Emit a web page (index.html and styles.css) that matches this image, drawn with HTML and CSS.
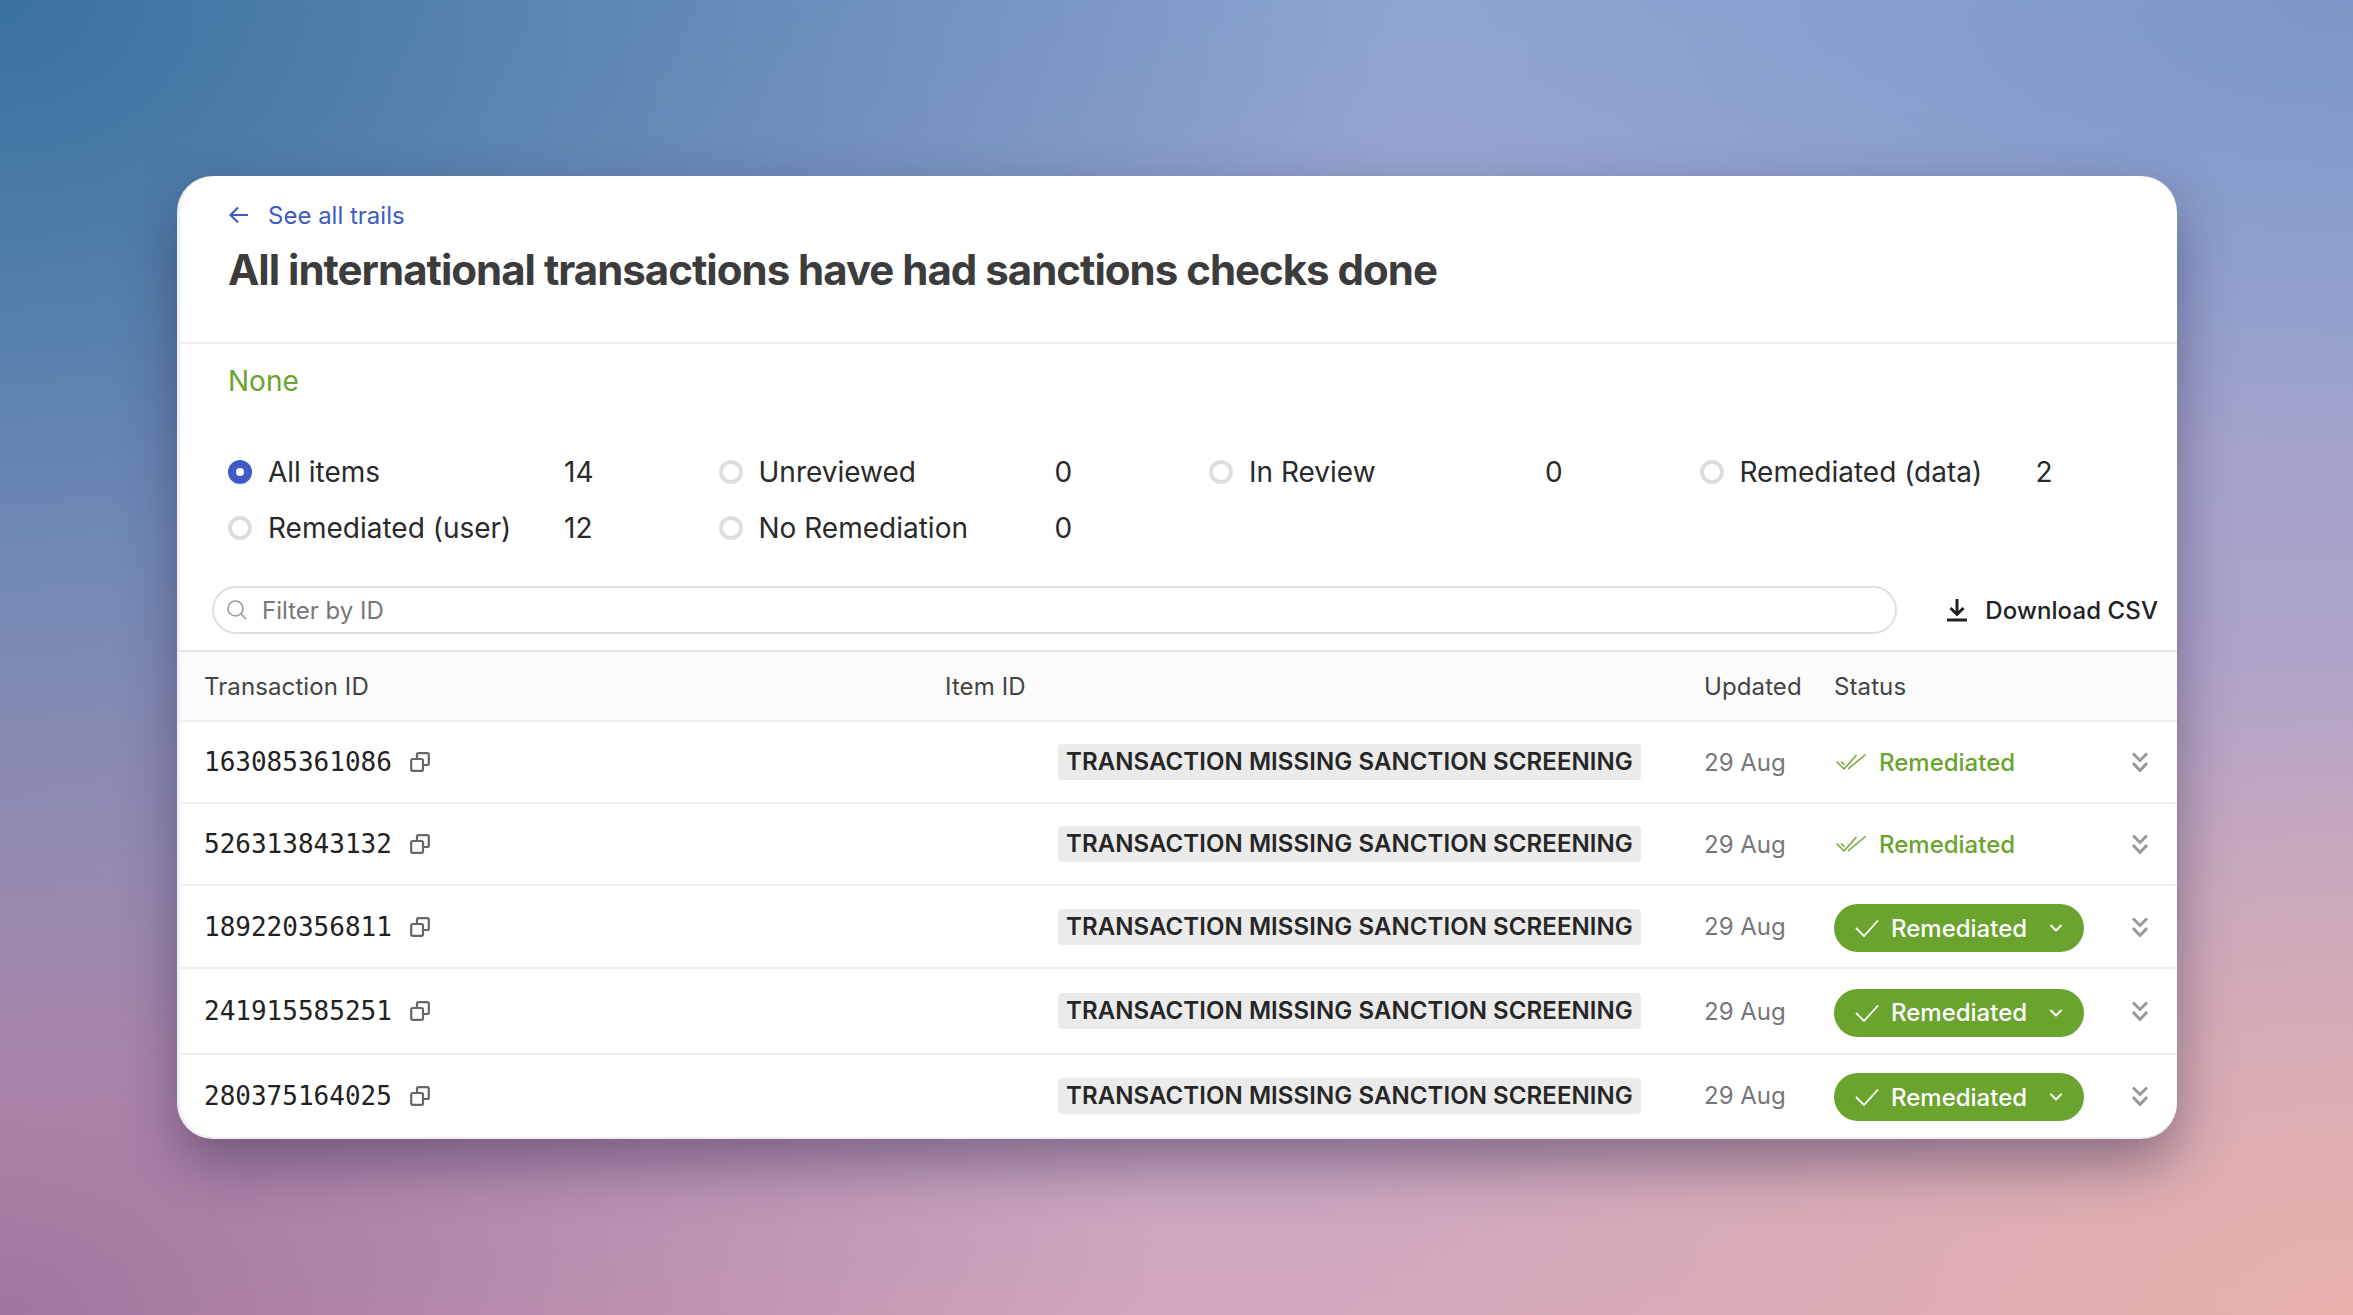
FILE: index.html
```html
<!DOCTYPE html>
<html lang="en">
  <head>
    <meta charset="UTF-8" />
    <meta name="viewport" content="width=device-width, initial-scale=1.0" />
    <title>All international transactions have had sanctions checks done</title>
    <link rel="stylesheet" href="styles.css">
  </head>
  <body>
    <svg class="defs" width="0" height="0">
      <symbol id="copy" viewBox="0 0 20 20">
        <rect x="1.2" y="7" width="11.8" height="11.8" rx="1.5" fill="none" stroke="currentColor" stroke-width="2.2" />
        <path d="M7 7V2.7C7 1.8 7.7 1.2 8.5 1.2h8.8c.8 0 1.5.6 1.5 1.5v8.8c0 .8-.7 1.5-1.5 1.5H13" fill="none" stroke="currentColor" stroke-width="2.2" />
      </symbol>
      <symbol id="double-check" viewBox="0 0 30 16">
        <path d="M0.500 7.500L8 15 20.500 1M5 7.500l3.500 3.500M12 15L29.500 0.500M8.500 15" fill="none" stroke="currentColor" stroke-width="1.400" />
      </symbol>
      <symbol id="chevrons" viewBox="0 0 16 20">
        <path d="M1 1.500l7 7 7-7M1 11l7 7.500L15 11" fill="none" stroke="currentColor" stroke-width="3" />
      </symbol>
      <symbol id="check" viewBox="0 0 24 18">
        <path d="M1 9l8 8L23 1.500" fill="none" stroke="currentColor" stroke-width="1.800" />
      </symbol>
      <symbol id="caret" viewBox="0 0 12 8">
        <path d="M1 1.500l5 5 5-5" fill="none" stroke="currentColor" stroke-width="2" stroke-linecap="round" stroke-linejoin="round" />
      </symbol>
    </svg>

    <div class="card">
      <div class="head">
        <a class="back" href="#">
          <svg width="20" height="18" viewBox="0 0 20 18"><path d="M9 1.500L1.500 9 9 16.500M2 9h17" fill="none" stroke="currentColor" stroke-width="2.200" /></svg>
          See all trails
        </a>
        <h1>All international transactions have had sanctions checks done</h1>
      </div>

      <div class="summary">
        <div class="none">None</div>
        <div class="filters">
          <div class="filter"><span class="radio on"></span><span class="filter-name">All items</span><span>14</span></div>
          <div class="filter"><span class="radio"></span><span class="filter-name">Unreviewed</span><span>0</span></div>
          <div class="filter"><span class="radio"></span><span class="filter-name">In Review</span><span>0</span></div>
          <div class="filter"><span class="radio"></span><span class="filter-name">Remediated (data)</span><span>2</span></div>
          <div class="filter"><span class="radio"></span><span class="filter-name">Remediated (user)</span><span>12</span></div>
          <div class="filter"><span class="radio"></span><span class="filter-name">No Remediation</span><span>0</span></div>
        </div>
      </div>

      <div class="toolbar">
        <div class="search">
          <svg width="20" height="20" viewBox="0 0 20 20"><circle cx="8.500" cy="8.500" r="7.500" fill="none" stroke="currentColor" stroke-width="1.600" /><path d="M14 14l5 5" fill="none" stroke="currentColor" stroke-width="1.600" /></svg>
          <span>Filter by ID</span>
        </div>
        <a class="download" href="#">
          <svg width="22" height="24" viewBox="0 0 22 24"><path d="M11 1v15M4.500 10l6.500 6.500 6.500-6.500M1 22h20" fill="none" stroke="currentColor" stroke-width="3" /></svg>
          Download CSV
        </a>
      </div>

      <div class="row table-head">
        <div>Transaction ID</div>
        <div>Item ID</div>
        <div>Updated</div>
        <div>Status</div>
      </div>

      <div class="row">
        <div class="tx">163085361086 <svg class="copy"><use href="#copy" /></svg></div>
        <div class="item"><span class="tag">TRANSACTION MISSING SANCTION SCREENING</span></div>
        <div class="date">29 Aug</div>
        <div class="status"><svg class="dbl"><use href="#double-check" /></svg>Remediated</div>
        <svg class="more"><use href="#chevrons" /></svg>
      </div>
      <div class="row">
        <div class="tx">526313843132 <svg class="copy"><use href="#copy" /></svg></div>
        <div class="item"><span class="tag">TRANSACTION MISSING SANCTION SCREENING</span></div>
        <div class="date">29 Aug</div>
        <div class="status"><svg class="dbl"><use href="#double-check" /></svg>Remediated</div>
        <svg class="more"><use href="#chevrons" /></svg>
      </div>
      <div class="row row-pill">
        <div class="tx">189220356811 <svg class="copy"><use href="#copy" /></svg></div>
        <div class="item"><span class="tag">TRANSACTION MISSING SANCTION SCREENING</span></div>
        <div class="date">29 Aug</div>
        <div><button class="pill"><svg class="pill-check"><use href="#check" /></svg>Remediated<svg class="pill-caret"><use href="#caret" /></svg></button></div>
        <svg class="more"><use href="#chevrons" /></svg>
      </div>
      <div class="row row-pill">
        <div class="tx">241915585251 <svg class="copy"><use href="#copy" /></svg></div>
        <div class="item"><span class="tag">TRANSACTION MISSING SANCTION SCREENING</span></div>
        <div class="date">29 Aug</div>
        <div><button class="pill"><svg class="pill-check"><use href="#check" /></svg>Remediated<svg class="pill-caret"><use href="#caret" /></svg></button></div>
        <svg class="more"><use href="#chevrons" /></svg>
      </div>
      <div class="row row-pill">
        <div class="tx">280375164025 <svg class="copy"><use href="#copy" /></svg></div>
        <div class="item"><span class="tag">TRANSACTION MISSING SANCTION SCREENING</span></div>
        <div class="date">29 Aug</div>
        <div><button class="pill"><svg class="pill-check"><use href="#check" /></svg>Remediated<svg class="pill-caret"><use href="#caret" /></svg></button></div>
        <svg class="more"><use href="#chevrons" /></svg>
      </div>
    </div>
  </body>
</html>
```

FILE: styles.css
```css
* {
  margin: 0;
  box-sizing: border-box;
}
html,
body {
  height: 100%;
  overflow: hidden;
}
body {
  padding: 176px 176px 0 177px;
  font-family: "Inter", sans-serif;
  font-size: 24px;
  color: #222;
  background:
    radial-gradient(ellipse 60% 85% at 0 0, #39719f 0%, rgba(57, 113, 159, 0) 100%),
    radial-gradient(ellipse 50% 60% at 0 100%, #a1769d 0%, rgba(161, 118, 157, 0) 100%),
    radial-gradient(ellipse 45% 50% at 100% 100%, #e6b1ab 0%, rgba(230, 177, 171, 0) 100%),
    radial-gradient(ellipse 40% 35% at 100% 0, #7d98c8 0%, rgba(125, 152, 200, 0) 100%),
    linear-gradient(180deg, #8fa5d1 0%, #aba3ca 45%, #d3a8bf 100%);
}
a {
  text-decoration: none;
  color: inherit;
}
.defs {
  position: absolute;
}
.card {
  width: 2000px;
  height: 963px;
  background: #fff;
  border-left: 3px solid #f0f0f2;
  border-bottom: 2px solid #eee;
  border-radius: 36px;
  overflow: hidden;
  box-shadow: 0 24px 55px rgba(40, 30, 70, 0.45);
}

.head {
  height: 168px;
  padding: 22px 48px 0;
  border-bottom: 2px solid #eee;
}
.back {
  display: flex;
  align-items: center;
  gap: 19px;
  height: 34px;
  color: #3d5bc4;
}
.back svg {
  margin-left: 1px;
}
h1 {
  margin-top: 13px;
  font-size: 42px;
  line-height: 50px;
  letter-spacing: -1px;
  font-weight: 650;
  color: #3c3c3c;
}

.summary {
  padding: 19px 48px 0;
}
.none {
  font-size: 28px;
  line-height: 36px;
  color: #6aa32d;
}
.filters {
  margin-top: 58px;
  display: grid;
  grid-template-columns: repeat(4, 490.500px);
  grid-auto-rows: 55.500px;
  align-items: start;
}
.filter {
  display: flex;
  align-items: center;
  height: 30px;
  font-size: 28px;
  color: #2a2a2a;
}
.filter-name {
  width: 296px;
}
.radio {
  width: 24px;
  height: 24px;
  margin-right: 16px;
  border: 4px solid #ddd;
  border-radius: 50%;
}
.radio.on {
  border: 8px solid #3f5bc8;
}

.toolbar {
  display: flex;
  align-items: center;
  padding: 0 19px 0 32px;
  height: 48px;
  margin-top: 18px;
  margin-bottom: 16px;
}
.search {
  display: flex;
  align-items: center;
  gap: 15px;
  flex: 0 0 1685px;
  height: 48px;
  padding-left: 13px;
  border: 2.500px solid #e0e0e0;
  border-radius: 24px;
  color: #777;
}
.search svg {
  color: #999;
}
.download {
  display: flex;
  align-items: center;
  gap: 17px;
  margin-left: auto;
  font-weight: 500;
  letter-spacing: 0.1px;
  white-space: nowrap;
}

.row {
  position: relative;
  display: grid;
  grid-template-columns: 741px 759px 130px 1fr;
  align-items: center;
  height: 82px;
  padding-left: 24px;
  border-top: 2px solid #eee;
}
.table-head {
  height: 70px;
  border-top: 2px solid #e4e4e4;
  background: #fbfbfb;
  color: #444;
  letter-spacing: 0.1px;
}
.row-pill {
  height: 83px;
}
.row-pill:nth-last-child(2) {
  height: 86px;
}
.row-pill:last-child {
  height: 83px;
}
.tx {
  display: flex;
  align-items: center;
  gap: 18px;
  font-family: "DejaVu Sans Mono", monospace;
  font-size: 26px;
  color: #222;
}
.copy {
  width: 20px;
  height: 20px;
  color: #666;
}
.item {
  padding-left: 113px;
}
.tag {
  display: inline-block;
  height: 36px;
  padding: 0 8px;
  line-height: 36px;
  background: #ebebeb;
  border-radius: 4px;
  font-weight: 600;
  letter-spacing: 0.08px;
  color: #262626;
  white-space: nowrap;
}
.date {
  color: #777;
}
.status {
  display: flex;
  align-items: center;
  gap: 13px;
  color: #6aa32d;
  font-weight: 500;
}
.dbl {
  width: 30px;
  height: 16px;
  margin-left: 2px;
}
.pill {
  display: flex;
  align-items: center;
  width: 250px;
  height: 48px;
  margin-top: 3px;
  padding: 0 0 0 21px;
  border: 0;
  border-radius: 24px;
  background: #6aa32d;
  color: #fff;
  font: 500 24px "Inter", sans-serif;
}
.pill-check {
  width: 24px;
  height: 18px;
  margin-right: 12px;
}
.pill-caret {
  width: 12px;
  height: 8px;
  margin-left: 23px;
}
/* sits over the last column, right side of the row */
.more {
  position: absolute;
  right: 29px;
  top: 50%;
  width: 16px;
  height: 20px;
  margin-top: -10px;
  color: #999;
}
```
